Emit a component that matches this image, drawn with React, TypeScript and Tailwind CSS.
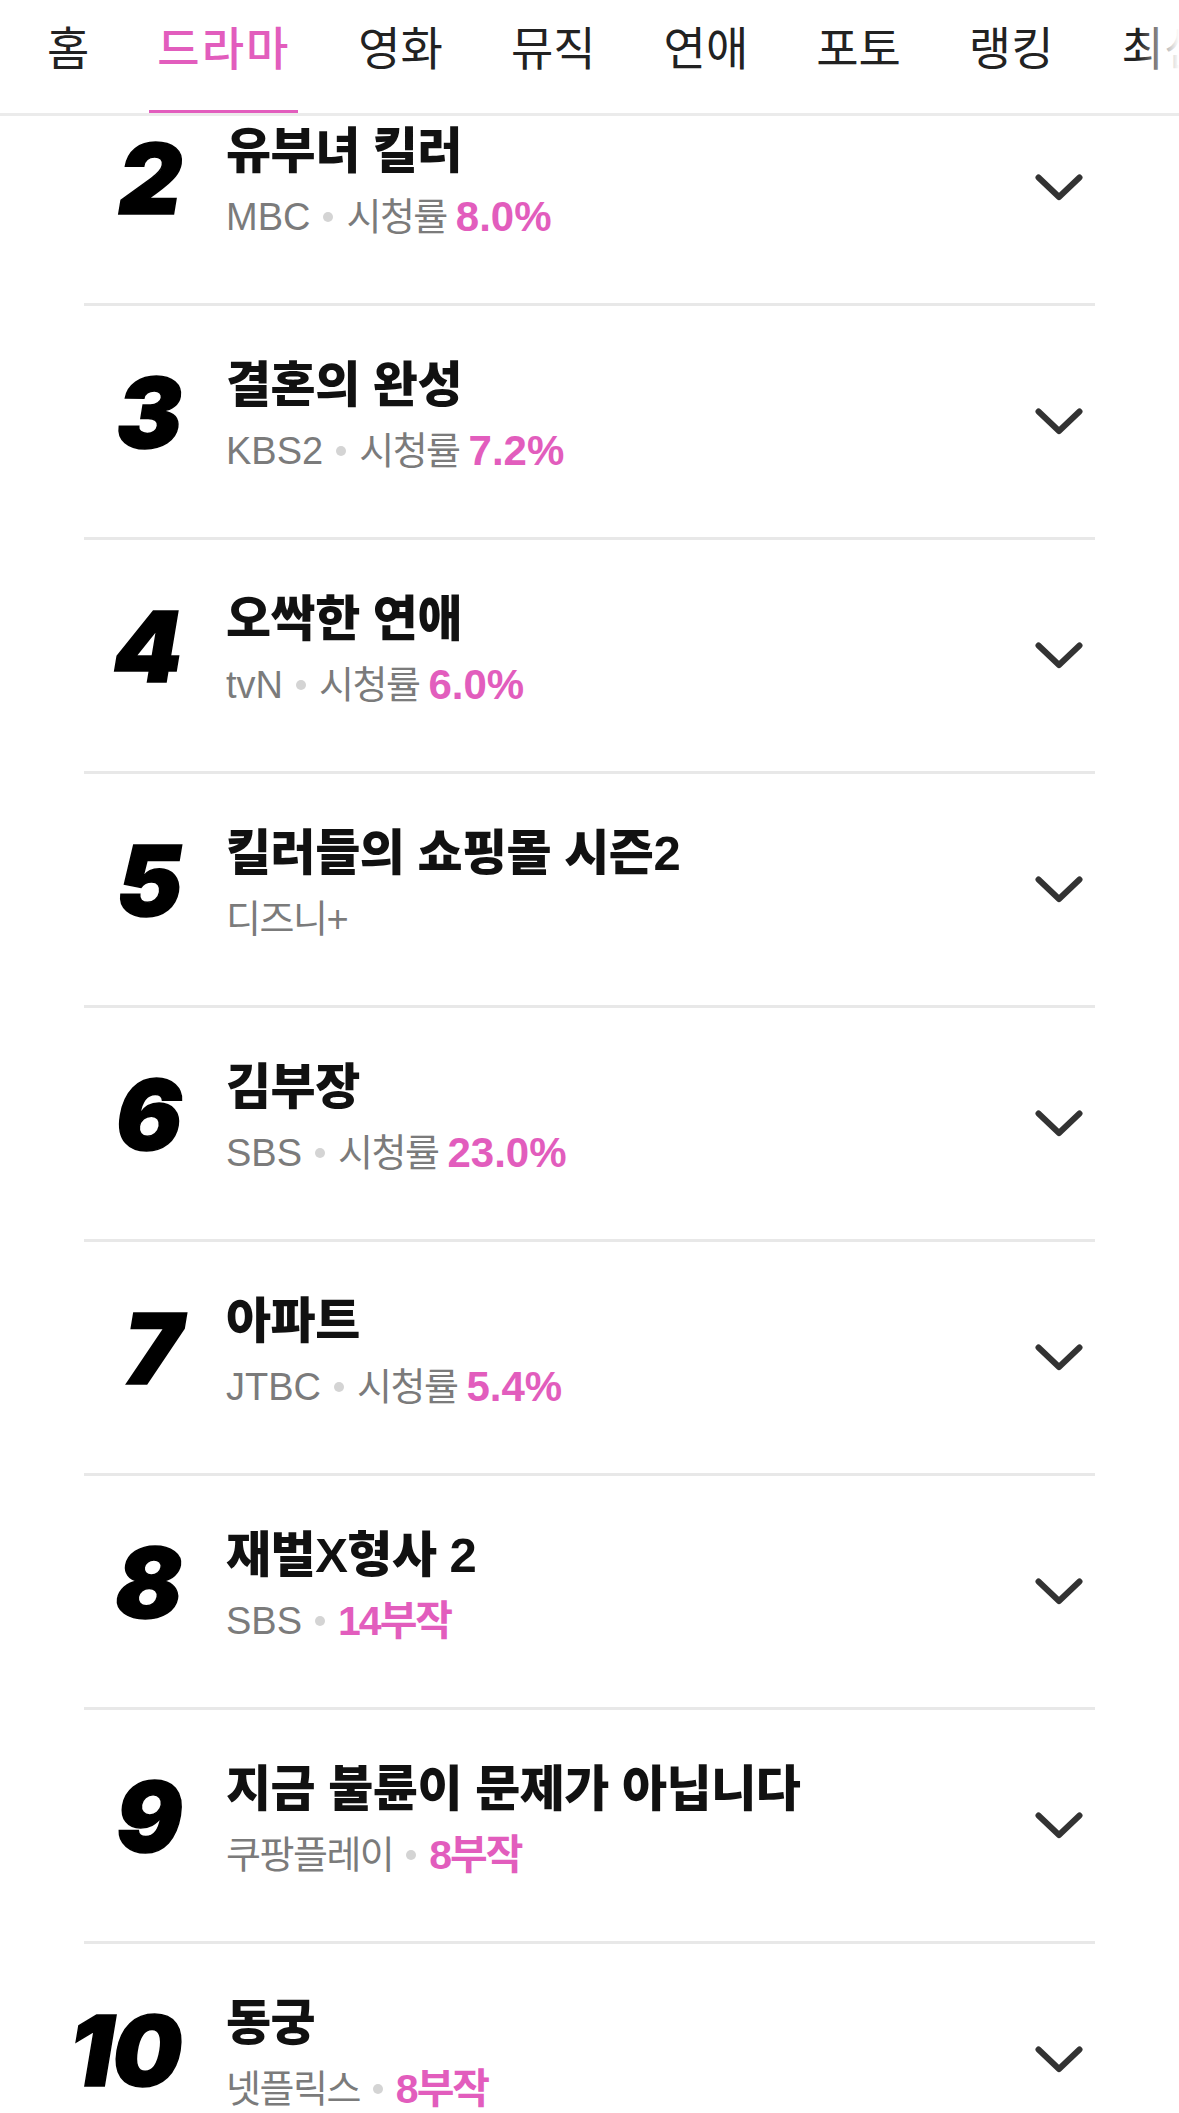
import React from 'react';

type Item = {
    rank: number;
    title: string;
    channel: string;
    label?: string;
    value?: string;
};

const tabs = ['홈', '드라마', '영화', '뮤직', '연애', '포토', '랭킹', '최신'];

const items: Item[] = [
    { rank: 2, title: '유부녀 킬러', channel: 'MBC', label: '시청률', value: '8.0%' },
    { rank: 3, title: '결혼의 완성', channel: 'KBS2', label: '시청률', value: '7.2%' },
    { rank: 4, title: '오싹한 연애', channel: 'tvN', label: '시청률', value: '6.0%' },
    { rank: 5, title: '킬러들의 쇼핑몰 시즌2', channel: '디즈니+' },
    { rank: 6, title: '김부장', channel: 'SBS', label: '시청률', value: '23.0%' },
    { rank: 7, title: '아파트', channel: 'JTBC', label: '시청률', value: '5.4%' },
    { rank: 8, title: '재벌X형사 2', channel: 'SBS', value: '14부작' },
    { rank: 9, title: '지금 불륜이 문제가 아닙니다', channel: '쿠팡플레이', value: '8부작' },
    { rank: 10, title: '동궁', channel: '넷플릭스', value: '8부작' },
];

const KR = { fontFamily: '"Liberation Sans", "Noto Sans CJK KR", sans-serif' };
const hasHangul = (s: string) => /[\uac00-\ud7a3]/.test(s);

const Chevron = () => (
    <svg width="48" height="27" viewBox="0 0 48 27" fill="none">
        <polyline points="3.5,3.5 24,23 44.5,3.5" stroke="#333" strokeWidth="6" strokeLinecap="round" strokeLinejoin="round" />
    </svg>
);

const Row = ({ item }: { item: Item }) => (
    <div className="flex h-[234px] items-center border-b-[3px] border-[#e8e8e8]">
        {/* rank */}
        <div
            className="-ml-[30px] w-[134px] shrink-0 pb-[18px] pr-[7px] text-right text-[98px] font-black italic leading-none tracking-[-1px] text-black [-webkit-text-stroke:1.5px_black]"
            style={{ fontFamily: 'Inter, Roboto, sans-serif' }}
        >
            {item.rank}
        </div>

        {/* title + meta */}
        <div className="ml-[38px] flex min-w-0 flex-1 flex-col pb-[8px]" style={KR}>
            <div className="text-[49px] font-extrabold leading-[60px] tracking-[-0.5px] text-[#111]">{item.title}</div>
            <div className="mt-[6px] flex items-center whitespace-nowrap text-[38px] leading-[60px] text-[#7b7b7b]">
                <span className={hasHangul(item.channel) ? 'tracking-[-1.5px]' : 'tracking-normal'}>{item.channel}</span>
                {item.value && (
                    <>
                        <span className="mx-[13px] h-[10px] w-[10px] rounded-full bg-[#d4d4d4]" />
                        {item.label && <span className="mr-[9px] tracking-[-1.5px]">{item.label}</span>}
                        <span
                            className={
                                hasHangul(item.value)
                                    ? 'text-[41px] font-bold tracking-[-2px] text-[#e25dbd]'
                                    : 'text-[42px] font-bold tracking-normal text-[#e25dbd]'
                            }
                        >
                            {item.value}
                        </span>
                    </>
                )}
            </div>
        </div>

        {/* expand */}
        <div className="flex w-[72px] shrink-0 items-center justify-center">
            <Chevron />
        </div>
    </div>
);

export default function App() {
    return (
        <div className="h-[2113px] w-[1179px] overflow-hidden bg-white">
            {/* Tabs */}
            <div className="relative z-10 h-[116px] overflow-hidden border-b-[3px] border-[#ebebeb] bg-white">
                <div className="flex h-full gap-[52px] whitespace-nowrap pl-[39px]" style={KR}>
                    {tabs.map((t, i) => (
                        <div key={t} className="relative flex h-full shrink-0 items-center px-2 pb-[14px]">
                            <span
                                className={
                                    i === 1
                                        ? 'text-[46px] font-medium tracking-[2px] text-[#e25dbd]'
                                        : 'text-[46px] font-normal tracking-normal text-[#222]'
                                }
                            >
                                {t}
                            </span>
                            {i === 1 && <div className="absolute bottom-[-3px] left-0 right-0 h-[6px] bg-[#e25dbd]" />}
                        </div>
                    ))}
                </div>
                <div className="absolute right-0 top-0 h-full w-[40px] bg-gradient-to-r from-transparent to-white" />
            </div>

            {/* Ranking list */}
            <div className="mx-[84px] -mt-[44px]">
                {items.map(item => (
                    <Row key={item.rank} item={item} />
                ))}
            </div>
        </div>
    );
}
